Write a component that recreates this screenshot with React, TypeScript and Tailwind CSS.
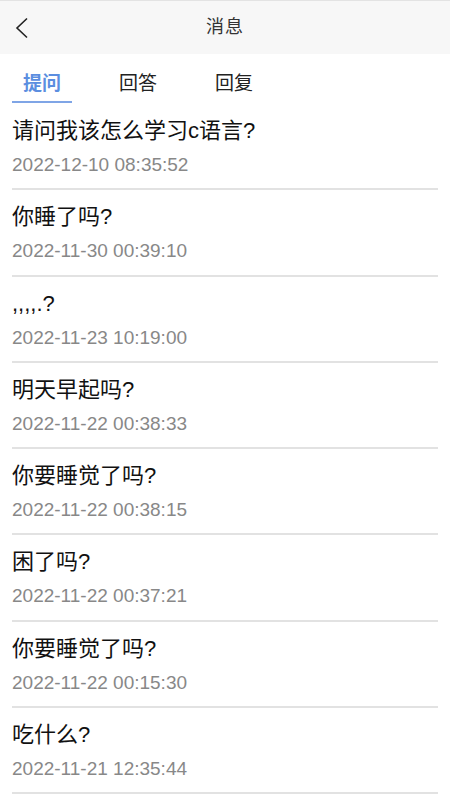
const items = [
  { title: "请问我该怎么学习c语言?", time: "2022-12-10 08:35:52" },
  { title: "你睡了吗?", time: "2022-11-30 00:39:10" },
  { title: ",,,,.?", time: "2022-11-23 10:19:00" },
  { title: "明天早起吗?", time: "2022-11-22 00:38:33" },
  { title: "你要睡觉了吗?", time: "2022-11-22 00:38:15" },
  { title: "困了吗?", time: "2022-11-22 00:37:21" },
  { title: "你要睡觉了吗?", time: "2022-11-22 00:15:30" },
  { title: "吃什么?", time: "2022-11-21 12:35:44" },
];

const tabs = ["提问", "回答", "回复"];

const App = () => {
  return (
    <div className="w-[450px] min-h-[800px] bg-white font-['Liberation_Sans','Noto_Sans_CJK_SC',sans-serif]">
      <div className="h-[54px] bg-[#f7f7f7] border-t border-[#e3e3e3] relative flex items-center justify-center">
        <svg
          className="absolute left-[14px] top-[16px]"
          width="16"
          height="22"
          viewBox="0 0 16 22"
          fill="none"
          stroke="#222"
          strokeWidth="1.6"
        >
          <path d="M13 1.5 L3 11 L13 20.5" />
        </svg>
        <span className="text-[18px] text-[#333] tracking-[1px]">消息</span>
      </div>

      <div className="flex gap-9 pl-3 pt-[16px]">
        {tabs.map((t, i) => (
          <div
            key={t}
            className={
              i === 0
                ? "w-[60px] flex justify-center pb-[3px] border-b-2 border-[#7fa5e6] text-[19px] leading-[28px] font-bold text-[#5b8ee0]"
                : "w-[60px] flex justify-center pb-[3px] border-b-2 border-transparent text-[19px] leading-[28px] text-[#222]"
            }
          >
            {t}
          </div>
        ))}
      </div>

      <div className="px-3 pt-px">
        {items.map((it, i) => (
          <div key={i} className="border-b-2 border-[#e2e2e2] pt-[12px] pb-[10.3px]">
            <div className="text-[22px] leading-[30px] text-[#111]">{it.title}</div>
            <div className="mt-[6px] text-[19px] leading-[26px] text-[#888]">{it.time}</div>
          </div>
        ))}
      </div>
    </div>
  );
};

export default App;
